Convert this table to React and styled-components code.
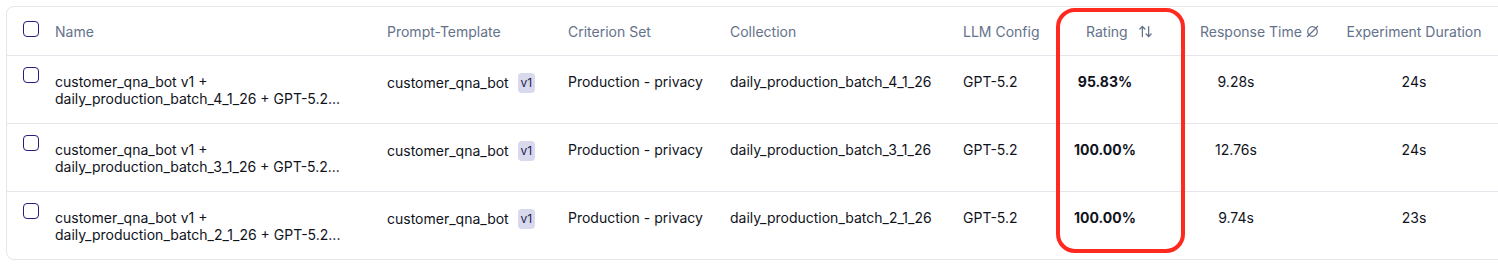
import React from 'react'
import styled, { createGlobalStyle } from 'styled-components'
import { ArrowUpDown } from 'lucide-react'

const GlobalStyle = createGlobalStyle`
  html, body {
    margin: 0;
    padding: 0;
    background: #ffffff;
    overflow: hidden;
  }
  body {
    font-family: Inter, "Noto Sans", "Liberation Sans", sans-serif;
    -webkit-font-smoothing: antialiased;
  }
`

const columns = '40px 332px 181px 162px 233px 102px 131px 152px 148px 120px'

const Page = styled.div`
  padding: 6px 0 0 6px;
  width: 1600px;
`

const Card = styled.div`
  position: relative;
  width: 1560px;
  border: 1px solid #e4e6eb;
  border-radius: 8px;
  background: #ffffff;
`

const HeaderRow = styled.div`
  display: grid;
  grid-template-columns: ${columns};
  height: 48px;
  border-bottom: 1px solid #e4e6eb;
`

const Row = styled.div`
  display: grid;
  grid-template-columns: ${columns};
  height: 67px;
  border-bottom: ${p => (p.$last ? 'none' : '1px solid #e4e6eb')};
`

const HeadCell = styled.div`
  display: flex;
  align-items: center;
  justify-content: ${p => p.$justify || 'flex-start'};
  gap: ${p => p.$gap ?? 11}px;
  padding: 0 ${p => p.$pr ?? 8}px 0 ${p => p.$pl ?? 8}px;
  font-size: 14px;
  color: #64728a;
  white-space: nowrap;
`

const Cell = styled.div`
  padding: 17px ${p => p.$pr ?? 8}px 0 ${p => p.$pl ?? 8}px;
  font-size: 14px;
  line-height: 18px;
  color: #10131c;
  text-align: ${p => p.$align || 'left'};
  font-weight: ${p => (p.$bold ? 700 : 400)};
  white-space: nowrap;
`

const CheckCell = styled.div`
  padding: ${p => p.$top}px 0 0 16px;
`

const Checkbox = styled.span`
  display: block;
  width: 16px;
  height: 16px;
  box-sizing: border-box;
  border: 1.5px solid #2c1a7c;
  border-radius: 4px;
`

const NameLine = styled.span`
  display: block;
  line-height: 17px;
`

const TemplateName = styled.span`
  display: flex;
  align-items: center;
  gap: 9px;
`

const VersionBadge = styled.span`
  display: inline-flex;
  align-items: center;
  justify-content: center;
  width: 17px;
  height: 20px;
  border-radius: 4px;
  background: #d9d9ee;
  color: #1d1c50;
  font-size: 12px;
`

const Highlight = styled.div`
  position: absolute;
  left: 1049px;
  top: 1px;
  width: 129px;
  height: 245px;
  box-sizing: border-box;
  border: 4px solid #fe2a20;
  border-radius: 19px;
  pointer-events: none;
`

const EmptySet = () => (
  <svg width="13" height="13" viewBox="0 0 13 13" fill="none" stroke="#64728a" strokeWidth="1.2">
    <circle cx="6.5" cy="6.5" r="4.8" />
    <line x1="1" y1="12" x2="12" y2="1" />
  </svg>
)

const rows = [
  { batch: 'daily_production_batch_4_1_26', rating: '95.83%', time: '9.28s', duration: '24s' },
  { batch: 'daily_production_batch_3_1_26', rating: '100.00%', time: '12.76s', duration: '24s' },
  { batch: 'daily_production_batch_2_1_26', rating: '100.00%', time: '9.74s', duration: '23s' },
]

export default function App() {
  return (
    <Page>
      <GlobalStyle />
      <Card>
        <HeaderRow>
          <CheckCell $top={14}><Checkbox /></CheckCell>
          <HeadCell>Name</HeadCell>
          <HeadCell>Prompt-Template</HeadCell>
          <HeadCell>Criterion Set</HeadCell>
          <HeadCell>Collection</HeadCell>
          <HeadCell>LLM Config</HeadCell>
          <HeadCell $pl={29} $gap={10}>
            Rating
            <ArrowUpDown size={15} strokeWidth={2} color="#64728a" />
          </HeadCell>
          <HeadCell $pl={12} $gap={4}>
            Response Time
            <EmptySet />
          </HeadCell>
          <HeadCell $justify="center">Experiment Duration</HeadCell>
          <HeadCell />
        </HeaderRow>
        {rows.map((r, i) => (
          <Row key={r.batch} $last={i === rows.length - 1}>
            <CheckCell $top={11}><Checkbox /></CheckCell>
            <Cell>
              <NameLine>customer_qna_bot v1 +</NameLine>
              <NameLine>{r.batch} + GPT-5.2...</NameLine>
            </Cell>
            <Cell>
              <TemplateName>
                customer_qna_bot
                <VersionBadge>v1</VersionBadge>
              </TemplateName>
            </Cell>
            <Cell>Production - privacy</Cell>
            <Cell>{r.batch}</Cell>
            <Cell>GPT-5.2</Cell>
            <Cell $align="center" $pl={10} $pr={45} $bold>{r.rating}</Cell>
            <Cell $align="center" $pl={12} $pr={68}>{r.time}</Cell>
            <Cell $align="center">{r.duration}</Cell>
            <Cell />
          </Row>
        ))}
        <Highlight />
      </Card>
    </Page>
  )
}
